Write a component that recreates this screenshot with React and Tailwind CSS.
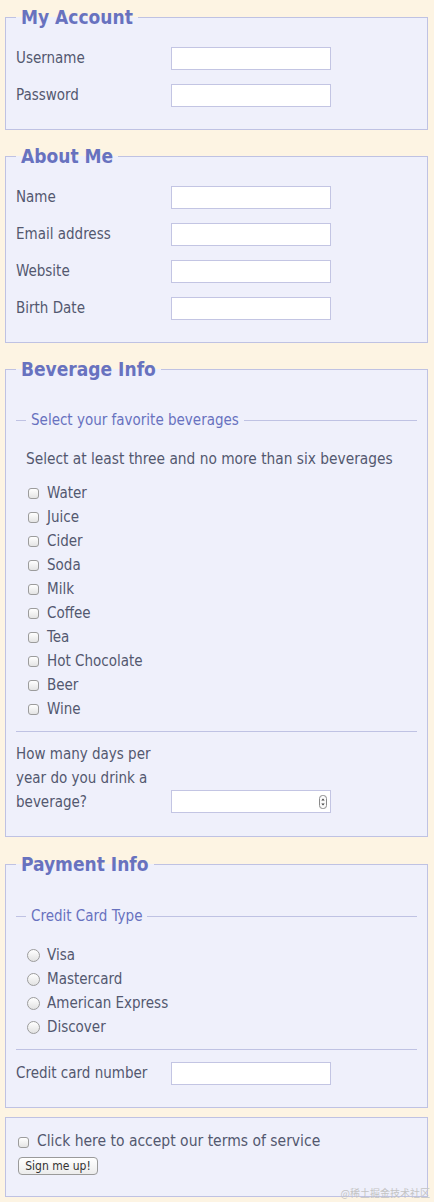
import React from "react";

const beverages = ["Water", "Juice", "Cider", "Soda", "Milk", "Coffee", "Tea", "Hot Chocolate", "Beer", "Wine"];
const cards = ["Visa", "Mastercard", "American Express", "Discover"];

function Field({ label }) {
    return (
        <div className="flex items-center h-[23px]">
            <label className="w-[155px] shrink-0">{label}</label>
            <input type="text" className="w-[160px] h-[23px] bg-white border border-[#c3c5e3] outline-none" />
        </div>
    );
}

function Box({ title, children, className = "" }) {
    return (
        <fieldset className={"mx-[5px] w-[423px] border border-[#bfc2e3] bg-[#eff0fb] px-[10px] " + className}>
            {title && (
                <legend className="px-[5px] text-[19px] font-bold leading-[30px] text-[#6872bf]">{title}</legend>
            )}
            {children}
        </fieldset>
    );
}

function SubBox({ title, children, className = "mt-[9px]" }) {
    return (
        <fieldset className={"border-t border-b border-[#bfc2e3] pl-[10px] pb-[10px] " + className}>
            <legend className="px-[5px] leading-[24px] text-[#6872bf]">{title}</legend>
            {children}
        </fieldset>
    );
}

export default function App() {
    return (
        <div className="relative min-h-[1202px] bg-[#fdf4e3] pt-[2px] text-[15px] text-[#53586f] font-['DejaVu_Sans_Condensed','DejaVu_Sans','Noto_Sans_CJK_SC',sans-serif]">
            {/* My Account */}
            <Box title="My Account" className="pt-[15px] pb-[22px] mb-[11px]">
                <div className="flex flex-col gap-[14px]">
                    <Field label="Username" />
                    <Field label="Password" />
                </div>
            </Box>

            {/* About Me */}
            <Box title="About Me" className="pt-[15px] pb-[22px] mb-[11px]">
                <div className="flex flex-col gap-[14px]">
                    <Field label="Name" />
                    <Field label="Email address" />
                    <Field label="Website" />
                    <Field label="Birth Date" />
                </div>
            </Box>

            {/* Beverage Info */}
            <Box title="Beverage Info" className="pt-[15px] pb-[22px] mb-[12px]">
                <SubBox title="Select your favorite beverages">
                    <p className="mt-[15px] mb-[10px] leading-[24px] text-[15.3px]">Select at least three and no more than six beverages</p>
                    {beverages.map((b) => (
                        <label key={b} className="flex items-center h-[24px]">
                            <input
                                type="checkbox"
                                className="appearance-none ml-[2px] mr-[8px] w-[11px] h-[11px] rounded-[3px] border border-[#9c9c9c] bg-linear-to-b from-white to-[#e4e4e4]"
                            />
                            <span>{b}</span>
                        </label>
                    ))}
                </SubBox>
                <div className="mt-[10px] flex items-end">
                    <label className="w-[155px] shrink-0 leading-[24px]">How many days per year do you drink a beverage?</label>
                    <div className="mb-[1px] w-[160px] h-[23px] bg-white border border-[#c3c5e3] flex items-center">
                        <input type="text" className="flex-1 min-w-0 h-full outline-none" />
                        <svg width="8" height="14" viewBox="0 0 8 14" className="mr-[3px]">
                            <rect x="0.5" y="0.5" width="7" height="13" rx="3" fill="#fafafa" stroke="#8a8a8a" />
                            <path d="M2.3 5.6 L4 3.4 L5.7 5.6 Z" fill="#444" />
                            <path d="M2.3 8.4 L4 10.6 L5.7 8.4 Z" fill="#444" />
                        </svg>
                    </div>
                </div>
            </Box>

            {/* Payment Info */}
            <Box title="Payment Info" className="pt-[15px] pb-[22px] mb-[9px]">
                <SubBox title="Credit Card Type" className="mt-[10px]">
                    <div className="mt-[15px]">
                        {cards.map((c) => (
                            <label key={c} className="flex items-center h-[24px]">
                                <input
                                    type="radio"
                                    name="card"
                                    className="appearance-none ml-[1px] mr-[7px] w-[13px] h-[13px] rounded-full border border-[#9c9c9c] bg-linear-to-b from-white to-[#e2e2e2]"
                                />
                                <span>{c}</span>
                            </label>
                        ))}
                    </div>
                </SubBox>
                <div className="mt-[12px]">
                    <Field label="Credit card number" />
                </div>
            </Box>

            {/* Terms */}
            <Box className="pt-[12px] pb-[19px]">
                <label className="flex items-center h-[24px] text-[15.5px]">
                    <input
                        type="checkbox"
                        className="appearance-none ml-[2px] mr-[8px] w-[11px] h-[11px] rounded-[3px] border border-[#9c9c9c] bg-linear-to-b from-white to-[#e4e4e4]"
                    />
                    <span>Click here to accept our terms of service</span>
                </label>
                <button className="mt-[3px] ml-[2px] h-[18px] w-[80px] rounded-[4px] border border-[#9a9a9a] bg-linear-to-b from-white to-[#ececec] text-[12px] leading-[16px] text-[#333]">
                    Sign me up!
                </button>
            </Box>

            <div className="absolute right-[4px] bottom-[2px] text-[10px] text-[#c4c4c4] font-['Noto_Sans_CJK_SC',sans-serif]">@稀土掘金技术社区</div>
        </div>
    );
}
